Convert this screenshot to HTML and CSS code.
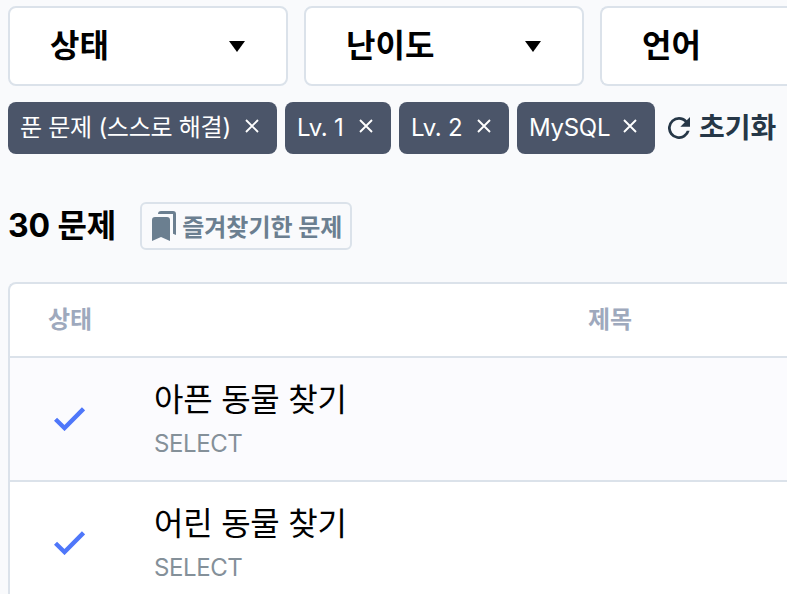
FILE: index.html
```html
<!DOCTYPE html>
<html lang="ko">
<head>
<meta charset="utf-8">
<title>문제</title>
<link rel="stylesheet" href="styles.css">
</head>
<body>
<main class="page">
  <div class="filters">
    <button class="select"><span>상태</span><svg class="caret" viewBox="0 0 16 11"><path d="M0 0h16L8 11z"/></svg></button>
    <button class="select"><span>난이도</span><svg class="caret" viewBox="0 0 16 11"><path d="M0 0h16L8 11z"/></svg></button>
    <button class="select select-last"><span>언어</span></button>
  </div>
  <div class="tags">
    <span class="tag tag-solved"><span>푼 문제 (스스로 해결)</span><svg class="close" viewBox="0 0 14 14"><path d="M1 1l12 12M13 1L1 13"/></svg></span>
    <span class="tag tag-one"><span>Lv. 1</span><svg class="close" viewBox="0 0 14 14"><path d="M1 1l12 12M13 1L1 13"/></svg></span>
    <span class="tag tag-two"><span>Lv. 2</span><svg class="close" viewBox="0 0 14 14"><path d="M1 1l12 12M13 1L1 13"/></svg></span>
    <span class="tag tag-sql"><span>MySQL</span><svg class="close" viewBox="0 0 14 14"><path d="M1 1l12 12M13 1L1 13"/></svg></span>
    <button class="reset"><svg class="refresh" viewBox="4 4 16 16"><path d="M17.65 6.35A7.96 7.96 0 0 0 12 4a8 8 0 1 0 7.73 10h-2.08A6 6 0 1 1 12 6c1.66 0 3.14.69 4.22 1.78L13 11h7V4z"/></svg><span>초기화</span></button>
  </div>
  <div class="summary">
    <h1 class="count">30 문제</h1>
    <button class="bookmark"><svg class="bookmark-icon" viewBox="0 0 24 30"><path d="M3 6h12a3 3 0 0 1 3 3v21l-9-4-9 4V9a3 3 0 0 1 3-3z"/><path d="M6 3a3 3 0 0 1 3-3h12a3 3 0 0 1 3 3v21l-3-1.300V3H6z"/></svg><span>즐겨찾기한 문제</span></button>
  </div>
  <section class="table">
    <div class="head"><span class="head-status">상태</span><span class="head-title">제목</span></div>
    <div class="row row-shaded">
      <svg class="check" viewBox="0 0 31 24"><path d="M1.500 12.200l9 8.800L29.500 1.800"/></svg>
      <div class="problem"><div class="title">아픈 동물 찾기</div><div class="part">SELECT</div></div>
    </div>
    <div class="row">
      <svg class="check" viewBox="0 0 31 24"><path d="M1.500 12.200l9 8.800L29.500 1.800"/></svg>
      <div class="problem"><div class="title">어린 동물 찾기</div><div class="part">SELECT</div></div>
    </div>
  </section>
</main>
</body>
</html>
```
FILE: styles.css
```css
* { box-sizing: border-box; }
body {
  margin: 0;
  background: #f9fafc;
  color: #000;
  font-family: Inter, "Noto Sans CJK KR", sans-serif;
}
button { font: inherit; color: inherit; margin: 0; }
svg { display: block; flex: none; }
.page { height: 594px; padding: 6px 0 0 8px; overflow: hidden; }
.filters { display: flex; gap: 16px; }
.select {
  display: flex;
  align-items: center;
  justify-content: space-between;
  width: 280px;
  height: 80px;
  padding: 0 41px 0 40px;
  border: 2px solid #dbe2ea;
  border-radius: 8px;
  background: #fff;
  font-size: 32px;
  font-weight: 700;
  line-height: 48px;
}
.select-last { flex: 1; border-right: 0; border-radius: 8px 0 0 8px; }
.caret { width: 16px; height: 11px; margin-top: 1px; }
.tags { display: flex; gap: 8px; margin-top: 16px; }
.tag {
  display: flex;
  align-items: center;
  justify-content: space-between;
  height: 52px;
  padding: 0 18px 0 12px;
  border-radius: 8px;
  background: #4b5569;
  color: #fff;
  font-size: 24px;
  letter-spacing: -0.27px;
  line-height: 36px;
  white-space: nowrap;
}
.tag-solved { width: 269px; }
.tag-one { width: 106px; }
.tag-two { width: 110px; }
.tag-sql { width: 138px; }
.close { width: 14px; height: 14px; margin-bottom: 4px; fill: none; stroke: #fff; stroke-width: 1.9; }
.reset {
  display: flex;
  align-items: center;
  gap: 9px;
  padding: 0 5px;
  border: 0;
  background: none;
  color: #263747;
  font-size: 28px;
  font-weight: 700;
  line-height: 42px;
}
.refresh { width: 22px; height: 22px; fill: currentColor; }
.summary { display: flex; align-items: center; gap: 24px; height: 48px; margin-top: 48px; }
.count { margin: 0; font-size: 32px; font-weight: 700; letter-spacing: -0.1px; line-height: 48px; }
.bookmark {
  display: flex;
  align-items: center;
  gap: 6px;
  width: 212px;
  height: 48px;
  padding: 0 10px;
  border: 2px solid #dbe2ea;
  border-radius: 6px;
  background: none;
  color: #6b7f90;
  font-size: 24px;
  font-weight: 700;
  line-height: 36px;
  white-space: nowrap;
}
.bookmark span { padding-top: 3px; }
.bookmark-icon { width: 24px; height: 30px; fill: currentColor; }
.table {
  margin-top: 32px;
  border: 2px solid #dbe2ea;
  border-right: 0;
  border-radius: 8px 0 0 0;
  background: #fff;
  overflow: hidden;
}
.head {
  display: flex;
  align-items: center;
  height: 74px;
  padding: 0 0 5px 38px;
  border-bottom: 2px solid #dbe2ea;
  color: #9ea9bd;
  font-size: 24px;
  font-weight: 700;
}
.head-status { width: 540px; }
.row { display: flex; align-items: center; height: 124px; padding-left: 44px; border-bottom: 2px solid #dbe2ea; }
.row-shaded { background: #fbfbfe; }
.check { width: 31px; height: 24px; fill: none; stroke: #4f77fa; stroke-width: 4.4; }
.problem { margin-left: 69px; }
.title { font-size: 32px; letter-spacing: -0.25px; line-height: 46px; }
.part { height: 38px; padding-top: 2px; color: #849099; font-size: 24px; letter-spacing: -0.4px; line-height: 37px; }
```
